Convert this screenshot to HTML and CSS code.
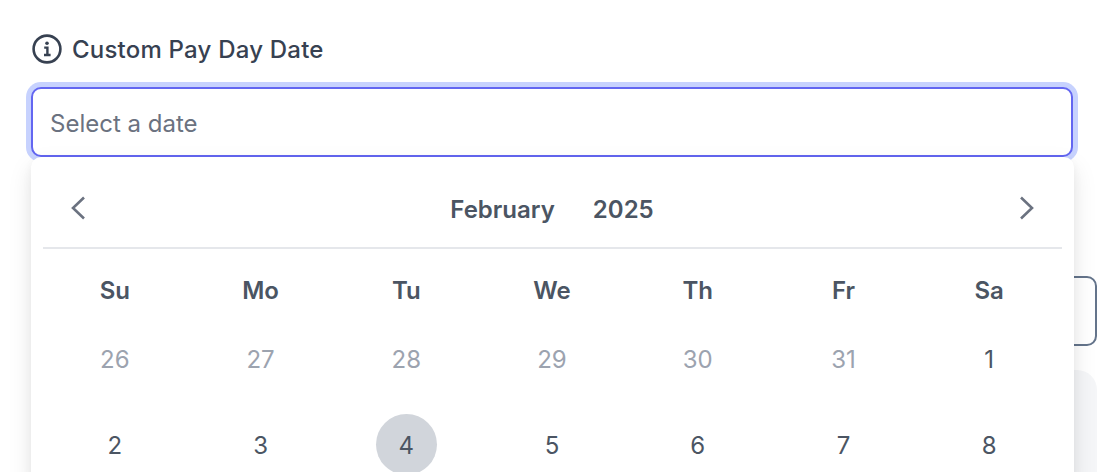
FILE: index.html
```html
<!DOCTYPE html>
<html lang="en">
<head>
<meta charset="utf-8">
<title>Custom Pay Day Date</title>
<link rel="stylesheet" href="styles.css">
</head>
<body>
<main class="page">
  <div class="label">
    <svg class="info" viewBox="0 0 30 30" fill="none" aria-hidden="true">
      <circle cx="15" cy="15" r="13.4" stroke="#374151" stroke-width="2.6"/>
      <circle cx="15" cy="9.3" r="1.8" fill="#374151"/>
      <path d="M12.2 13.6H15.4V20.4M12 21H18.6" stroke="#374151" stroke-width="2.4"/>
    </svg>
    <span>Custom Pay Day Date</span>
  </div>
  <div class="field-wrap">
    <div class="input">Select a date</div>
    <section class="calendar">
      <header class="cal-head">
        <svg class="chev" viewBox="0 0 16 26" fill="none" aria-hidden="true"><path d="M14 2.5L3 13L14 23.5" stroke="#6b7280" stroke-width="2.6"/></svg>
        <div class="month"><span>February</span><span>2025</span></div>
        <svg class="chev" viewBox="0 0 16 26" fill="none" aria-hidden="true"><path d="M2 2.5L13 13L2 23.5" stroke="#6b7280" stroke-width="2.6"/></svg>
      </header>
      <div class="grid">
        <div class="dow">Su</div><div class="dow">Mo</div><div class="dow">Tu</div><div class="dow">We</div><div class="dow">Th</div><div class="dow">Fr</div><div class="dow">Sa</div>
        <div class="day muted">26</div><div class="day muted">27</div><div class="day muted">28</div><div class="day muted">29</div><div class="day muted">30</div><div class="day muted">31</div><div class="day">1</div>
        <div class="day">2</div><div class="day">3</div><div class="day"><span class="today">4</span></div><div class="day">5</div><div class="day">6</div><div class="day">7</div><div class="day">8</div>
      </div>
    </section>
  </div>
  <div class="behind-btn"></div>
  <div class="behind-card"></div>
</main>
</body>
</html>
```

FILE: styles.css
```css
html, body {
  margin: 0;
  padding: 0;
  height: 472px;
  overflow: hidden;
  background: #fff;
}
body {
  font-family: Inter, "Liberation Sans", sans-serif;
}
.page {
  height: 472px;
  overflow: hidden;
  box-sizing: border-box;
  padding: 32px 11px 0 31px;
}
.label {
  display: flex;
  align-items: center;
  gap: 10px;
  height: 34px;
  color: #374151;
  font-size: 24px;
  font-weight: 500;
  letter-spacing: .21px;
  padding-left: 1px;
}
.info {
  width: 30px;
  height: 30px;
  flex: none;
}
.field-wrap {
  position: relative;
  width: 1043px;
  margin-top: 21px;
}
.input {
  box-sizing: border-box;
  width: 1042px;
  height: 70px;
  display: flex;
  align-items: center;
  padding: 2px 0 0 17px;
  border: 2px solid #6366f1;
  border-radius: 10px;
  box-shadow: 0 0 0 5px #c7d2fe;
  color: #6b7280;
  font-size: 24px;
  background: #fff;
}
.calendar {
  position: absolute;
  z-index: 2;
  top: 70px;
  left: 0;
  width: 1043px;
  height: 330px;
  box-sizing: border-box;
  padding: 0 12px;
  background: #fff;
  border-radius: 10px;
  box-shadow: 0 10px 24px rgba(0, 0, 0, .1), 0 4px 10px rgba(0, 0, 0, .05);
}
.cal-head {
  box-sizing: border-box;
  height: 92px;
  display: flex;
  align-items: center;
  justify-content: space-between;
  padding: 11px 27px 0 27px;
  border-bottom: 2px solid #e5e7eb;
}
.chev {
  width: 16px;
  height: 26px;
  flex: none;
}
.month {
  display: flex;
  gap: 38px;
  color: #4b5563;
  font-size: 24px;
  font-weight: 600;
  line-height: 30px;
  padding-top: 5px;
  margin-left: -1px;
}
.grid {
  display: grid;
  grid-template-columns: repeat(7, 1fr);
  grid-template-rows: 83px 55px 117px;
  width: 1020px;
  margin-left: -1px;
}
.dow {
  display: flex;
  align-items: center;
  justify-content: center;
  color: #4b5563;
  font-size: 24px;
  font-weight: 600;
}
.day {
  display: flex;
  align-items: center;
  justify-content: center;
  color: #4b5563;
  font-size: 24px;
}
.muted {
  color: #9ca3af;
}
.today {
  box-sizing: border-box;
  width: 61px;
  height: 61px;
  margin-top: -2px;
  padding-top: 2px;
  border-radius: 50%;
  background: #d1d5db;
  display: flex;
  align-items: center;
  justify-content: center;
}
.behind-btn {
  box-sizing: border-box;
  height: 70px;
  margin-top: 119px;
  margin-left: 900px;
  border: 2px solid #64748b;
  border-radius: 10px;
}
.behind-card {
  height: 200px;
  margin-top: 24px;
  margin-left: 900px;
  background: #f5f6f8;
  border-radius: 20px;
}
```
